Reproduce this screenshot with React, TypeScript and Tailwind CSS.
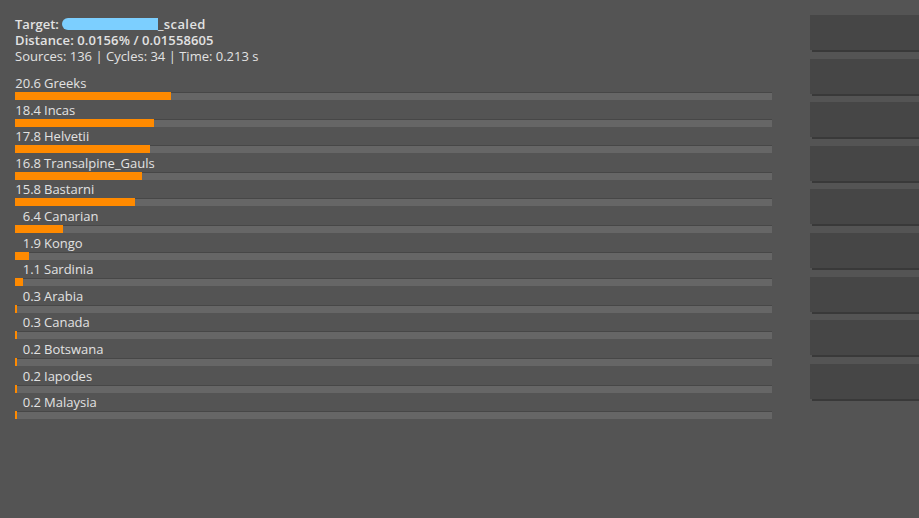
const rows: { value: number; name: string }[] = [
  { value: 20.6, name: 'Greeks' },
  { value: 18.4, name: 'Incas' },
  { value: 17.8, name: 'Helvetii' },
  { value: 16.8, name: 'Transalpine_Gauls' },
  { value: 15.8, name: 'Bastarni' },
  { value: 6.4, name: 'Canarian' },
  { value: 1.9, name: 'Kongo' },
  { value: 1.1, name: 'Sardinia' },
  { value: 0.3, name: 'Arabia' },
  { value: 0.3, name: 'Canada' },
  { value: 0.2, name: 'Botswana' },
  { value: 0.2, name: 'Iapodes' },
  { value: 0.2, name: 'Malaysia' },
];

function SourceRow({ value, name }: { value: number; name: string }) {
  return (
    <div className="h-[26.6px]">
      <div className="flex h-4 items-center text-[13px] leading-4 text-[#e2e2e2]">
        <span className="w-[26px] text-right">{value.toFixed(1)}</span>
        <span className="ml-[3px]">{name}</span>
      </div>
      <div className="mt-px h-2 border-t border-[#474747] bg-[#666]">
        <div className="-mt-px h-2 bg-[#ff8a00]" style={{ width: `${value}%` }} />
      </div>
    </div>
  );
}

export default function App() {
  return (
    <div
      className="flex h-[518px] w-[919px] overflow-hidden bg-[#545454]"
      style={{ fontFamily: '"Open Sans", "Noto Sans", sans-serif' }}
    >
      <div className="w-[772px] shrink-0 pl-[15px] pt-4">
        <div className="text-[13px] leading-4 text-[#e2e2e2]">
          <div className="flex items-center font-semibold">
            <span>Target:</span>
            {/* hidden file name */}
            <span className="ml-[3px] h-[12px] w-[96px] rounded-l-full rounded-r-[40%] bg-[#7ccfff]" />
            <span className="tracking-[0.4px]">_scaled</span>
          </div>
          <div className="font-semibold tracking-[0.1px]">Distance: 0.0156% / 0.01558605</div>
          <div>Sources: 136 | Cycles: 34 | Time: 0.213 s</div>
        </div>
        <div className="mt-[11px]">
          {rows.map((r) => (
            <SourceRow key={r.name} value={r.value} name={r.name} />
          ))}
        </div>
      </div>

      <div className="ml-[38px] flex flex-1 flex-col gap-[8.6px] pt-[15px]">
        {Array.from({ length: 9 }).map((_, i) => (
          <div key={i} className="h-[35px] bg-[#464646] shadow-[2px_2px_0_#393939]" />
        ))}
      </div>
    </div>
  );
}
